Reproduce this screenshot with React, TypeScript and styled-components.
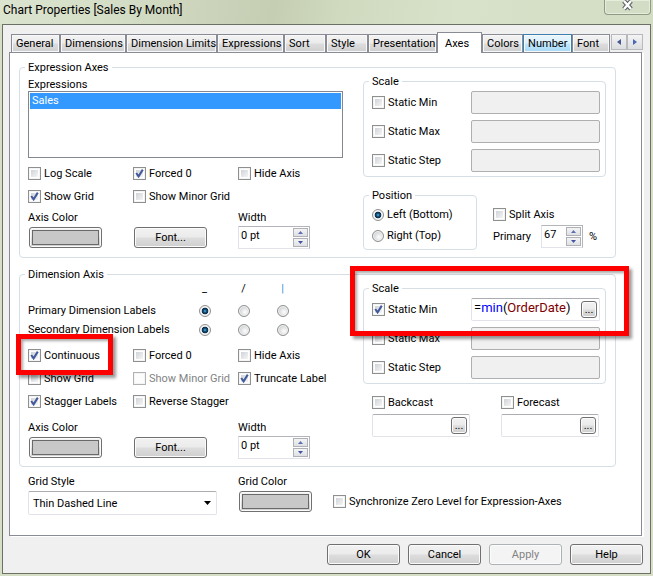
import React, { useState } from "react";
import styled, { createGlobalStyle, css } from "styled-components";

const GlobalStyle = createGlobalStyle`
  *, *::before, *::after { box-sizing: border-box; }
  body {
    margin: 0;
    background: #d6dfc6;
    font-family: Roboto, "Liberation Sans", sans-serif;
    font-size: 11px;
    line-height: 15px;
    color: #000;
  }
  button, input, select { font: inherit; color: inherit; margin: 0; }
`;

const Window = styled.main`
  display: flex;
  flex-direction: column;
  padding: 0 2px 2px;
  background: #d6dfc6;
`;

const TitleBar = styled.header`
  display: flex;
  justify-content: space-between;
  align-items: flex-start;
  height: 24px;
  margin: 0 -2px;
  padding-left: 3px;
  background: linear-gradient(100deg, #dbe4cf 0%, #d3dcc4 20%, #c5ceb3 42%, #d0dabf 52%, #d8e2ca 70%, #d3ddc3 100%);
`;

const Title = styled.h1`
  margin: 0;
  font-size: 12px;
  font-weight: 400;
  line-height: 20px;
`;

const CloseButton = styled.button`
  display: flex;
  align-items: flex-start;
  justify-content: center;
  width: 47px;
  height: 15px;
  margin-right: 2px;
  padding: 0;
  border: 1px solid #8f9986;
  border-top: 0;
  border-radius: 0 0 4px 4px;
  background: #d3dcc5;
  box-shadow: inset 0 0 0 1px #e6edda;
`;

const Client = styled.div`
  border: 1px solid #6b7165;
  background: #f0f0f0;
  padding: 7px 7px 8px 6px;
`;

const TabBar = styled.nav`
  display: flex;
  align-items: flex-end;
  padding-left: 2px;
`;

const Tab = styled.button<{ $w: number; $hot?: boolean; $active?: boolean }>`
  flex: 0 1 ${(p) => p.$w}px;
  height: 18px;
  padding: 0 0 0 4px;
  border: 1px solid #898c95;
  border-bottom: 0;
  background: linear-gradient(#f3f3f3, #ebebeb 48%, #dddddd 52%, #cfcfcf);
  box-shadow: inset 0 0 0 1px #f8f8f8;
  text-align: left;
  line-height: 17px;
  white-space: nowrap;
  ${(p) => p.$hot && css`
    border-color: #3c7fb1;
    background: linear-gradient(#eaf6fd, #d9f0fc 48%, #bee6fd 52%, #a7d9f5);
  `}
  ${(p) => p.$active && css`
    position: relative;
    height: 21px;
    margin-bottom: -1px;
    padding-left: 7px;
    background: #fff;
    box-shadow: none;
  `}
`;

const TabScroll = styled.div`
  display: flex;
  align-self: flex-start;
  margin-top: 2px;
  margin-left: auto;
`;

const ScrollButton = styled.button`
  display: grid;
  place-items: center;
  width: 16px;
  height: 16px;
  padding: 0;
  border: 1px solid #b8b9bd;
  background: linear-gradient(#f4f4f4, #dcdde0);
`;

const Panel = styled.section`
  display: flex;
  flex-direction: column;
  margin-right: 1px;
  padding: 7px 25px 20px 9px;
  border: 1px solid #898c95;
  background: #fff;
  box-shadow: 2px 1px 0 #fff;
`;

const Group = styled.fieldset`
  min-width: 0;
  margin: 0 0 9px;
  padding: 0 9px 7px 8px;
  border: 1px solid #d5dfe5;
  border-radius: 4px;
  &:last-of-type { margin-bottom: 0; }
`;

const Legend = styled.legend`
  margin-left: -3px;
  padding: 0 3px;
`;

const Columns = styled.div`
  display: grid;
  grid-template-columns: minmax(0, 1fr) 243px;
  column-gap: 20px;
`;

const InnerGroup = styled.fieldset<{ $narrow?: boolean }>`
  position: relative;
  min-width: 0;
  margin: 0;
  padding: ${(p) => (p.$narrow ? "2px 5px 3px 8px" : "3px 5px 4px 8px")};
  width: ${(p) => (p.$narrow ? "114px" : "auto")};
  border: 1px solid #d5dfe5;
  border-radius: 4px;
`;

const InnerLegend = styled(Legend)`
  line-height: 13px;
`;

const ScaleRows = styled.div`
  display: grid;
  row-gap: 6px;
`;

const ScaleRow = styled.div`
  display: grid;
  grid-template-columns: 1fr 129px;
  align-items: center;
`;

const Field = styled.div<{ $disabled?: boolean }>`
  position: relative;
  display: flex;
  align-items: center;
  height: 23px;
  padding-right: 2px;
  border: 1px solid ${(p) => (p.$disabled ? "#afafaf" : "#e2e3ea")};
  border-top-color: ${(p) => (p.$disabled ? "#afafaf" : "#abadb3")};
  border-radius: 2px;
  background: ${(p) => (p.$disabled ? "#f0f0f0" : "#fff")};
`;

const FieldInput = styled.input`
  flex: 1;
  min-width: 0;
  height: 100%;
  padding: 0 0 0 2px;
  border: 0;
  background: transparent;
  outline: 0;
`;

const FormulaInput = styled(FieldInput)`
  font-size: 13px;
  color: transparent;
  caret-color: #000;
`;

const Highlight = styled.span`
  position: absolute;
  left: 2px;
  top: 0;
  font-size: 13px;
  line-height: 17px;
  pointer-events: none;
`;

const Keyword = styled.span`
  color: #0000ff;
`;

const FieldName = styled.span`
  color: #800000;
`;

const face = css`
  border: 1px solid #707070;
  border-radius: 3px;
  background: linear-gradient(#f2f2f2, #ebebeb 48%, #dddddd 52%, #cfcfcf);
  box-shadow: inset 0 0 0 1px #fbfbfb;
`;

const EllipsisButton = styled.button`
  ${face}
  flex: none;
  width: 16px;
  height: 17px;
  padding: 0;
  line-height: 13px;
`;

const PushButton = styled.button`
  ${face}
  width: 73px;
  height: 21px;
  padding: 0;
  line-height: 19px;
  &:disabled {
    border-color: #adb2b5;
    background: #f4f4f4;
    color: #838383;
  }
`;

const SwatchButton = styled(PushButton)`
  padding: 2px;
`;

const Swatch = styled.span`
  display: block;
  height: 100%;
  border: 1px solid #696969;
  background: #c8c8c8;
`;

const List = styled.ul`
  height: 67px;
  margin: 0;
  padding: 1px;
  border: 1px solid #828790;
  list-style: none;
`;

const ListItem = styled.li`
  padding-left: 2px;
  line-height: 16px;
  background: #3399ff;
  color: #fff;
`;

const LeftColumn = styled.div`
  min-width: 0;
`;

const ListLabel = styled.div`
  height: 16px;
  padding-top: 2px;
`;

const CheckGrid = styled.div<{ $top: number }>`
  display: grid;
  grid-template-columns: 105px 105px 1fr;
  grid-auto-rows: 23px;
  align-items: center;
  margin-top: ${(p) => p.$top}px;
`;

const CheckLabel = styled.label<{ $disabled?: boolean }>`
  position: relative;
  display: inline-flex;
  align-items: center;
  justify-self: start;
  gap: 3px;
  white-space: nowrap;
  color: ${(p) => (p.$disabled ? "#838383" : "inherit")};
`;

const tick = `url("data:image/svg+xml,%3Csvg xmlns='http://www.w3.org/2000/svg' viewBox='0 0 11 11'%3E%3Cpath d='M2.2 5 4.600 8.400 8.800 1.600' fill='none' stroke='%23425a9c' stroke-width='2'/%3E%3C/svg%3E")`;

const CheckInput = styled.input.attrs({ type: "checkbox" })`
  appearance: none;
  flex: none;
  width: 13px;
  height: 13px;
  border: 1px solid #8e8f8f;
  background: linear-gradient(135deg, #cfd3d8, #f5f5f5) content-box, #fff;
  padding: 2px;
  box-shadow: inset 0 0 0 1px #f4f4f4;
  &:checked {
    background: ${tick} center / 11px 11px no-repeat border-box, linear-gradient(135deg, #cfd3d8, #f5f5f5) content-box, #fff;
  }
  &:disabled { border-color: #b1b1b1; background: #fcfcfc; }
`;

const RadioInput = styled.input.attrs({ type: "radio" })`
  appearance: none;
  flex: none;
  width: 12px;
  height: 12px;
  border: 1px solid #8e8f8f;
  border-radius: 50%;
  background: radial-gradient(circle at 60% 60%, #f8f8f8 10%, #d4d6d9 60%);
  box-shadow: inset 0 0 0 1px #f4f4f4;
  &:checked {
    background: radial-gradient(circle at 50% 50%, #49c0e6 0, #16507c 22%, #0c2c46 42%, #f4f4f4 52%);
  }
`;

const ControlRow = styled.div<{ $top: number }>`
  display: grid;
  grid-template-columns: 105px 105px 1fr;
  align-items: end;
  margin-top: ${(p) => p.$top}px;
`;

const Labelled = styled.div`
  display: grid;
  row-gap: 1px;
  justify-items: start;
`;

const ControlSlot = styled.div`
  display: flex;
  align-items: center;
  height: 23px;
  padding-left: 1px;
`;

const SpinBox = styled.div<{ $w: number }>`
  display: flex;
  width: ${(p) => p.$w}px;
  height: 23px;
  padding: 1px;
  border: 1px solid #b4b5bb;
  border-left-color: #e2e3ea;
  border-bottom-color: #e2e3ea;
  background: #fff;
`;

const SpinInput = styled.input`
  flex: 1;
  min-width: 0;
  height: 15px;
  padding: 0 0 0 1px;
  border: 0;
  outline: 0;
  background: transparent;
`;

const SpinButtons = styled.span`
  display: grid;
  grid-template-rows: 1fr 1fr;
  row-gap: 1px;
  width: 15px;
`;

const SpinButton = styled.button`
  display: grid;
  place-items: center;
  padding: 0;
  border: 1px solid #b0b1b7;
  background: linear-gradient(#f4f4f4, #dfe0e4);
`;

const PositionRow = styled.div`
  display: flex;
  column-gap: 16px;
  margin-top: 12px;
`;

const OptionStack = styled.div<{ $top?: boolean }>`
  display: grid;
  grid-template-rows: 21px auto;
  align-items: center;
  align-content: start;
  padding-top: ${(p) => (p.$top ? "15px" : "0")};
`;

const OptionCell = styled.div`
  display: flex;
  align-items: center;
  min-height: 21px;
`;

const PrimaryRow = styled.div`
  display: grid;
  grid-template-columns: 48px 42px auto;
  align-items: center;
`;

const Percent = styled.span`
  padding-left: 6px;
`;

const AngleGrid = styled.div`
  display: grid;
  grid-template-columns: 157px 39px 39px 39px;
  grid-auto-rows: 19px;
  align-items: center;
  justify-items: center;
`;

const AngleLabel = styled.span`
  justify-self: start;
  white-space: nowrap;
`;

const AngleMark = styled.span<{ $accent?: boolean }>`
  align-self: start;
  line-height: 13px;
  color: ${(p) => (p.$accent ? "#2e8be0" : "inherit")};
`;

const CastRow = styled.div`
  display: grid;
  grid-template-columns: 98px 98px;
  column-gap: 31px;
  margin-top: 7px;
  padding-left: 9px;
`;

const CastCell = styled.div`
  display: grid;
  grid-template-columns: minmax(0, 1fr);
  grid-template-rows: 23px 23px;
  align-items: center;
`;

const Callout = styled.span<{ $wide?: boolean }>`
  position: absolute;
  left: ${(p) => (p.$wide ? -14 : -12)}px;
  top: ${(p) => (p.$wide ? -29 : -14)}px;
  width: ${(p) => (p.$wide ? 279 : 97)}px;
  height: ${(p) => (p.$wide ? 70 : 41)}px;
  border: 5px solid #ff0000;
  box-shadow: 3px 3px 3px rgba(0, 0, 0, 0.4), inset 2px 2px 3px rgba(0, 0, 0, 0.35);
  pointer-events: none;
  z-index: 2;
`;

const GridSettings = styled.div`
  display: flex;
  align-items: flex-start;
  margin-top: 7px;
  padding-left: 9px;
`;

const GridStyle = styled.label`
  display: grid;
  row-gap: 2px;
  width: 189px;
  margin-right: 21px;
`;

const Select = styled.select`
  appearance: none;
  height: 24px;
  padding: 0 20px 0 4px;
  border: 1px solid #e2e3ea;
  border-top-color: #abadb3;
  border-radius: 2px;
  background: url("data:image/svg+xml,%3Csvg xmlns='http://www.w3.org/2000/svg' viewBox='0 0 7 4'%3E%3Cpath d='M0 0h7L3.500 4z'/%3E%3C/svg%3E") right 5px center / 7px 4px no-repeat #fff;
`;

const GridColor = styled.div`
  width: 95px;
`;

const SyncSlot = styled.div`
  display: flex;
  align-items: center;
  height: 23px;
  margin-top: 16px;
`;

const Footer = styled.footer`
  display: flex;
  justify-content: flex-end;
  gap: 8px;
  padding-top: 8px;
`;

type CheckProps = { label: string; checked?: boolean; disabled?: boolean; children?: React.ReactNode };

function Check({ label, checked = false, disabled, children }: CheckProps) {
  const [on, setOn] = useState(checked);
  return (
    <CheckLabel $disabled={disabled}>
      <CheckInput checked={on} disabled={disabled} onChange={() => setOn(!on)} />
      {label}
      {children}
    </CheckLabel>
  );
}

function Spin({ label, value, width }: { label: string; value: string; width: number }) {
  return (
    <SpinBox $w={width}>
      <SpinInput aria-label={label} defaultValue={value} />
      <SpinButtons>
        <SpinButton aria-label={`Increase ${label}`}>
          <svg width="5" height="3" viewBox="0 0 5 3"><path d="M0 3h5L2.5 0z" fill="#5b6fb5" /></svg>
        </SpinButton>
        <SpinButton aria-label={`Decrease ${label}`}>
          <svg width="5" height="3" viewBox="0 0 5 3"><path d="M0 0h5L2.5 3z" fill="#4053a0" /></svg>
        </SpinButton>
      </SpinButtons>
    </SpinBox>
  );
}

function ColorButton({ label }: { label: string }) {
  return (
    <Labelled>
      <span>{label}</span>
      <ControlSlot>
        <SwatchButton aria-label={label}><Swatch /></SwatchButton>
      </ControlSlot>
    </Labelled>
  );
}

function AxisControls({ top }: { top: number }) {
  return (
    <ControlRow $top={top}>
      <ColorButton label="Axis Color" />
      <ControlSlot><PushButton>Font...</PushButton></ControlSlot>
      <Labelled>
        <span>Width</span>
        <Spin label="Width" value="0 pt" width={72} />
      </Labelled>
    </ControlRow>
  );
}

function Scale({ formula }: { formula?: boolean }) {
  return (
    <InnerGroup>
      <InnerLegend>Scale</InnerLegend>
      <ScaleRows>
        <ScaleRow>
          <Check label="Static Min" checked={formula} />
          {formula ? (
            <Field>
              <FormulaInput aria-label="Static Min expression" defaultValue="=min(OrderDate)" />
              <Highlight aria-hidden>
                =<Keyword>min</Keyword>(<FieldName>OrderDate</FieldName>)
              </Highlight>
              <EllipsisButton aria-label="Edit expression">...</EllipsisButton>
            </Field>
          ) : (
            <Field $disabled><FieldInput aria-label="Static Min value" disabled /></Field>
          )}
        </ScaleRow>
        {["Static Max", "Static Step"].map((name) => (
          <ScaleRow key={name}>
            <Check label={name} />
            <Field $disabled><FieldInput aria-label={`${name} value`} disabled /></Field>
          </ScaleRow>
        ))}
      </ScaleRows>
      {formula && <Callout $wide />}
    </InnerGroup>
  );
}

function Cast({ label }: { label: string }) {
  return (
    <CastCell>
      <Check label={label} />
      <Field>
        <FieldInput aria-label={`${label} expression`} />
        <EllipsisButton aria-label={`Edit ${label}`}>...</EllipsisButton>
      </Field>
    </CastCell>
  );
}

function AngleRow({ label, name }: { label: string; name: string }) {
  return (
    <>
      <AngleLabel>{label}</AngleLabel>
      {["horizontal", "diagonal", "vertical"].map((angle, i) => (
        <RadioInput key={angle} name={name} aria-label={`${label} ${angle}`} defaultChecked={i === 0} />
      ))}
    </>
  );
}

const tabs = [
  { name: "General", w: 49 },
  { name: "Dimensions", w: 66 },
  { name: "Dimension Limits", w: 91 },
  { name: "Expressions", w: 67 },
  { name: "Sort", w: 42 },
  { name: "Style", w: 42 },
  { name: "Presentation", w: 69 },
  { name: "Axes", w: 45, active: true },
  { name: "Colors", w: 41 },
  { name: "Number", w: 49, hot: true },
  { name: "Font", w: 38 },
];

export default function App() {
  return (
    <>
      <GlobalStyle />
      <Window>
        <TitleBar>
          <Title>Chart Properties [Sales By Month]</Title>
          <CloseButton aria-label="Close">
            <svg width="13" height="11" viewBox="0 0 13 11">
              <path d="M3 1 10 9M10 1 3 9" stroke="#5a5f66" strokeWidth="4.500" />
              <path d="M3 1 10 9M10 1 3 9" stroke="#fff" strokeWidth="2.400" />
            </svg>
          </CloseButton>
        </TitleBar>
        <Client>
          <TabBar>
            {tabs.map((t) => (
              <Tab key={t.name} $w={t.w} $active={t.active} $hot={t.hot}>{t.name}</Tab>
            ))}
            <TabScroll>
              <ScrollButton aria-label="Scroll tabs left">
                <svg width="4" height="6" viewBox="0 0 4 6"><path d="M4 0v6L0 3z" fill="#44598f" /></svg>
              </ScrollButton>
              <ScrollButton aria-label="Scroll tabs right">
                <svg width="4" height="6" viewBox="0 0 4 6"><path d="M0 0v6l4-3z" fill="#4a66b8" /></svg>
              </ScrollButton>
            </TabScroll>
          </TabBar>
          <Panel>
            <Group>
              <Legend>Expression Axes</Legend>
              <Columns>
                <LeftColumn>
                  <ListLabel id="expressions">Expressions</ListLabel>
                  <List role="listbox" aria-labelledby="expressions">
                    <ListItem role="option" aria-selected>Sales</ListItem>
                  </List>
                  <CheckGrid $top={4}>
                    <Check label="Log Scale" />
                    <Check label="Forced 0" checked />
                    <Check label="Hide Axis" />
                    <Check label="Show Grid" checked />
                    <Check label="Show Minor Grid" />
                  </CheckGrid>
                  <AxisControls top={2} />
                </LeftColumn>
                <div>
                  <Scale />
                  <PositionRow>
                    <InnerGroup $narrow>
                      <InnerLegend>Position</InnerLegend>
                      <OptionStack>
                        <CheckLabel><RadioInput name="position" defaultChecked />Left (Bottom)</CheckLabel>
                        <OptionCell><CheckLabel><RadioInput name="position" />Right (Top)</CheckLabel></OptionCell>
                      </OptionStack>
                    </InnerGroup>
                    <OptionStack $top>
                      <Check label="Split Axis" />
                      <PrimaryRow>
                        <span>Primary</span>
                        <Spin label="Primary" value="67" width={42} />
                        <Percent>%</Percent>
                      </PrimaryRow>
                    </OptionStack>
                  </PositionRow>
                </div>
              </Columns>
            </Group>
            <Group>
              <Legend>Dimension Axis</Legend>
              <Columns>
                <LeftColumn>
                  <AngleGrid>
                    <span />
                    <AngleMark>_</AngleMark>
                    <AngleMark>/</AngleMark>
                    <AngleMark $accent>|</AngleMark>
                    <AngleRow label="Primary Dimension Labels" name="primary" />
                    <AngleRow label="Secondary Dimension Labels" name="secondary" />
                  </AngleGrid>
                  <CheckGrid $top={5}>
                    <Check label="Continuous" checked><Callout /></Check>
                    <Check label="Forced 0" />
                    <Check label="Hide Axis" />
                    <Check label="Show Grid" />
                    <Check label="Show Minor Grid" disabled />
                    <Check label="Truncate Label" checked />
                    <Check label="Stagger Labels" checked />
                    <Check label="Reverse Stagger" />
                  </CheckGrid>
                  <AxisControls top={7} />
                </LeftColumn>
                <div>
                  <Scale formula />
                  <CastRow>
                    <Cast label="Backcast" />
                    <Cast label="Forecast" />
                  </CastRow>
                </div>
              </Columns>
            </Group>
            <GridSettings>
              <GridStyle>
                Grid Style
                <Select defaultValue="Thin Dashed Line">
                  <option>Thin Dashed Line</option>
                  <option>Thin Solid Line</option>
                </Select>
              </GridStyle>
              <GridColor>
                <ColorButton label="Grid Color" />
              </GridColor>
              <SyncSlot>
                <Check label="Synchronize Zero Level for Expression-Axes" />
              </SyncSlot>
            </GridSettings>
          </Panel>
          <Footer>
            <PushButton>OK</PushButton>
            <PushButton>Cancel</PushButton>
            <PushButton disabled>Apply</PushButton>
            <PushButton>Help</PushButton>
          </Footer>
        </Client>
      </Window>
    </>
  );
}
